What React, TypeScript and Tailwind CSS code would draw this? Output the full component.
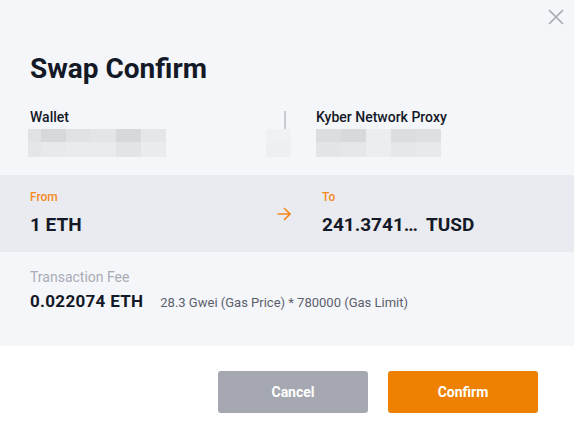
import React from "react";

type Cell = { w: string; bg: string };

const walletRows: Cell[][] = [
  [
    { w: "w-[13px]", bg: "bg-[#e1e2e6]" },
    { w: "w-[25px]", bg: "bg-[#d7d8dc]" },
    { w: "w-[25px]", bg: "bg-[#e1e2e6]" },
    { w: "w-[25px]", bg: "bg-[#e4e5e9]" },
    { w: "w-[25px]", bg: "bg-[#d7d8dc]" },
    { w: "w-[25px]", bg: "bg-[#e5e6ea]" }
  ],
  [
    { w: "w-[13px]", bg: "bg-[#e5e6ea]" },
    { w: "w-[25px]", bg: "bg-[#e8e9ed]" },
    { w: "w-[25px]", bg: "bg-[#eaebef]" },
    { w: "w-[25px]", bg: "bg-[#eaebef]" },
    { w: "w-[25px]", bg: "bg-[#e3e4e8]" },
    { w: "w-[25px]", bg: "bg-[#ebecf0]" }
  ]
];

const proxyRows: Cell[][] = [
  [
    { w: "w-[25px]", bg: "bg-[#dcdde1]" },
    { w: "w-[25px]", bg: "bg-[#d8d9dd]" },
    { w: "w-[25px]", bg: "bg-[#ecedf1]" },
    { w: "w-[25px]", bg: "bg-[#dcdde1]" },
    { w: "w-[25px]", bg: "bg-[#dedfe3]" }
  ],
  [
    { w: "w-[25px]", bg: "bg-[#e4e5e9]" },
    { w: "w-[25px]", bg: "bg-[#e6e7eb]" },
    { w: "w-[25px]", bg: "bg-[#ecedf1]" },
    { w: "w-[25px]", bg: "bg-[#e6e7eb]" },
    { w: "w-[25px]", bg: "bg-[#e8e9ed]" }
  ]
];

/** Blurred address placeholder, drawn as a small mosaic. */
function Mosaic({ rows }: { rows: Cell[][] }) {
  return (
    <div className="flex flex-col">
      {rows.map((row, i) => (
        <div key={i} className={`flex ${i === 0 ? "h-[13px]" : "h-[15px]"}`}>
          {row.map((c, j) => (
            <div key={j} className={`${c.w} ${c.bg}`} />
          ))}
        </div>
      ))}
    </div>
  );
}

export default function App() {
  return (
    <div className="relative flex h-[424px] w-[574px] flex-col bg-white font-['Roboto',sans-serif] text-[#141927]">
      <div className="flex h-[346px] flex-col bg-[#f5f6fa]">
        <button className="absolute right-[10px] top-[9px] h-4 w-4" aria-label="close">
          <svg viewBox="0 0 16 16" width="16" height="16" fill="none" stroke="#a3a6ae" strokeWidth="1.5">
            <path d="M1 1 L15 15 M15 1 L1 15" />
          </svg>
        </button>

        <h1 className="px-[30px] pt-[51px] text-[28px] font-bold leading-[36px]">Swap Confirm</h1>

        <div className="mt-[21px] flex">
          <div className="w-[266px] shrink-0 pl-[30px]">
            <div className="text-[14px] font-medium leading-[18px]">Wallet</div>
            <div className="-ml-[2px] mt-[3px]">
              <Mosaic rows={walletRows} />
            </div>
          </div>
          <div className="w-[50px] shrink-0">
            <div className="ml-[18px] mt-[3px] h-[18px] w-[2px] bg-[#c9cbd0]" />
            <div className="flex w-[25px] flex-col">
              <div className="h-[13px] bg-[#f0f1f5]" />
              <div className="h-[15px] bg-[#eeeff3]" />
            </div>
          </div>
          <div>
            <div className="text-[14px] font-medium leading-[18px]">Kyber Network Proxy</div>
            <div className="mt-[3px]">
              <Mosaic rows={proxyRows} />
            </div>
          </div>
        </div>

        <div className="mt-[18px] flex h-[77px] bg-[#eaebf0] pt-[14px]">
          <div className="w-[277px] shrink-0 pl-[30px]">
            <div className="text-[12px] font-medium leading-[16px] text-[#f5891f]">From</div>
            <div className="mt-[8px] text-[19px] font-bold leading-[24px]">1 ETH</div>
          </div>
          <div className="w-[45px] shrink-0 pt-[18px]">
            <svg viewBox="0 0 14 14" width="14" height="14" fill="none" stroke="#f5891f" strokeWidth="1.6">
              <path d="M0.5 7 H13 M7 1 L13 7 L7 13" />
            </svg>
          </div>
          <div>
            <div className="text-[12px] font-medium leading-[16px] text-[#f5891f]">To</div>
            <div className="mt-[8px] text-[19px] font-bold leading-[24px]">
              241.3741…<span className="ml-[8px]">TUSD</span>
            </div>
          </div>
        </div>

        <div className="px-[30px] pt-[16px]">
          <div className="text-[14px] leading-[18px] text-[#a8acb6]">Transaction Fee</div>
          <div className="mt-[5px] flex items-baseline">
            <span className="text-[17px] font-bold leading-[20px] tracking-[0.3px]">0.022074 ETH</span>
            <span className="ml-[17px] text-[13px] leading-[16px] text-[#5b606c]">
              28.3 Gwei (Gas Price) * 780000 (Gas Limit)
            </span>
          </div>
        </div>
      </div>

      <div className="flex justify-end gap-[20px] pr-[36px] pt-[25px]">
        <button className="h-[42px] w-[150px] rounded-[3px] bg-[#a5a8b1] text-[14px] font-bold text-white">
          Cancel
        </button>
        <button className="h-[42px] w-[150px] rounded-[3px] bg-[#ef8102] text-[14px] font-bold text-white">
          Confirm
        </button>
      </div>
    </div>
  );
}
